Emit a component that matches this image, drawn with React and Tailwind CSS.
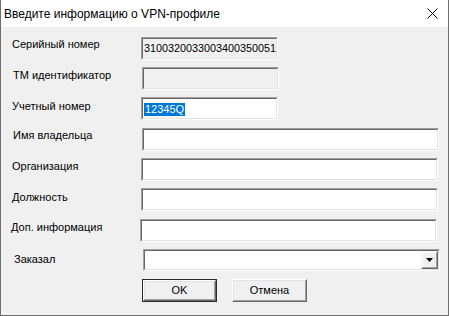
import React from 'react';

const Sunken = ({ className = '', bg = 'bg-white', children }) => (
  <div className={`border border-t-[#a0a0a0] border-l-[#a0a0a0] border-b-white border-r-white ${className}`}>
    <div className={`h-full border border-t-[#696969] border-l-[#696969] border-b-[#e3e3e3] border-r-[#e3e3e3] ${bg} overflow-hidden`}>
      {children}
    </div>
  </div>
);

const Button = ({ label, primary }) => (
  <div className={`w-[75px] h-[23px] ${primary ? 'border border-[#2b2b2b]' : ''}`}>
    <div className="h-full border border-t-white border-l-white border-b-[#696969] border-r-[#696969]">
      <div className="h-full flex items-center justify-center border border-t-[#e3e3e3] border-l-[#e3e3e3] border-b-[#a0a0a0] border-r-[#a0a0a0] bg-[#f0f0f0] text-[11px] text-black">
        {label}
      </div>
    </div>
  </div>
);

const Row = ({ label, labelClass = 'ml-[12px] mt-[2px]', rowClass, children }) => (
  <div className={`flex items-start ${rowClass}`}>
    <div className={`w-[129px] shrink-0 leading-[13px] ${labelClass}`}>{label}</div>
    {children}
  </div>
);

export default function App() {
  return (
    <div className="w-[449px] h-[316px] bg-[#f0f0f0] border-l border-r border-b border-[#6f6f6f] flex flex-col text-black" style={{ fontFamily: '"Liberation Sans", Arial, sans-serif' }}>
      <div className="h-[27px] bg-white flex items-center justify-between shrink-0">
        <span className="ml-[3px] mt-[1px] text-[12px]">Введите информацию о VPN-профиле</span>
        <svg width="11" height="11" viewBox="0 0 11 11" className="mr-[10px]">
          <path d="M0.5 0.5 L10.5 10.5 M10.5 0.5 L0.5 10.5" stroke="#000" strokeWidth="1" fill="none" />
        </svg>
      </div>
      <div className="flex flex-col text-[11px] pt-[10px]">
        <Row label="Серийный номер" labelClass="ml-[11px] mt-[1px]">
          <Sunken className="w-[137px] h-[23px]" bg="bg-[#f0f0f0]">
            <div className="pl-[1px] pt-[3px] leading-[13px] whitespace-nowrap text-[10.8px]">3100320033003400350051</div>
          </Sunken>
        </Row>
        <Row label="ТМ идентификатор" labelClass="ml-[12px] mt-[2px]" rowClass="mt-[7px]">
          <Sunken className="w-[137px] h-[23px]" bg="bg-[#f0f0f0]" />
        </Row>
        <Row label="Учетный номер" labelClass="ml-[11px] mt-[3px]" rowClass="mt-[7px]">
          <Sunken className="w-[137px] h-[23px]">
            <div className="pl-[1px] pt-[2px]">
              <span className="inline-block bg-[#0078d7] text-white leading-[13px] px-[1px]">12345Q</span>
            </div>
          </Sunken>
        </Row>
        <Row label="Имя владельца" labelClass="ml-[12px] mt-[1px]" rowClass="mt-[8px]">
          <Sunken className="w-[297px] h-[23px]" />
        </Row>
        <Row label="Организация" labelClass="ml-[11px] mt-[2px]" rowClass="mt-[7px]">
          <Sunken className="w-[297px] h-[23px]" />
        </Row>
        <Row label="Должность" labelClass="ml-[11px] mt-[3px]" rowClass="mt-[7px]">
          <Sunken className="w-[297px] h-[23px]" />
        </Row>
        <Row label="Доп. информация" labelClass="ml-[10px] mt-[2px]" rowClass="mt-[8px]">
          <Sunken className="w-[297px] h-[23px]" />
        </Row>
        <Row label="Заказал" labelClass="ml-[13px] mt-[4px]" rowClass="mt-[7px]">
          <Sunken className="w-[297px] h-[22px]">
            <div className="h-full flex justify-end">
              <div className="w-[17px] h-full border border-t-[#f0f0f0] border-l-[#f0f0f0] border-b-[#696969] border-r-[#696969]">
                <div className="h-full flex items-center justify-center border border-t-white border-l-white border-b-[#a0a0a0] border-r-[#a0a0a0] bg-[#f0f0f0]">
                  <svg width="7" height="4" viewBox="0 0 7 4">
                    <path d="M0 0 H7 L3.5 4 Z" fill="#000" />
                  </svg>
                </div>
              </div>
            </div>
          </Sunken>
        </Row>
        <div className="flex gap-[15px] ml-[141px] mt-[8px]">
          <Button label="OK" primary />
          <Button label="Отмена" />
        </div>
      </div>
    </div>
  );
}
